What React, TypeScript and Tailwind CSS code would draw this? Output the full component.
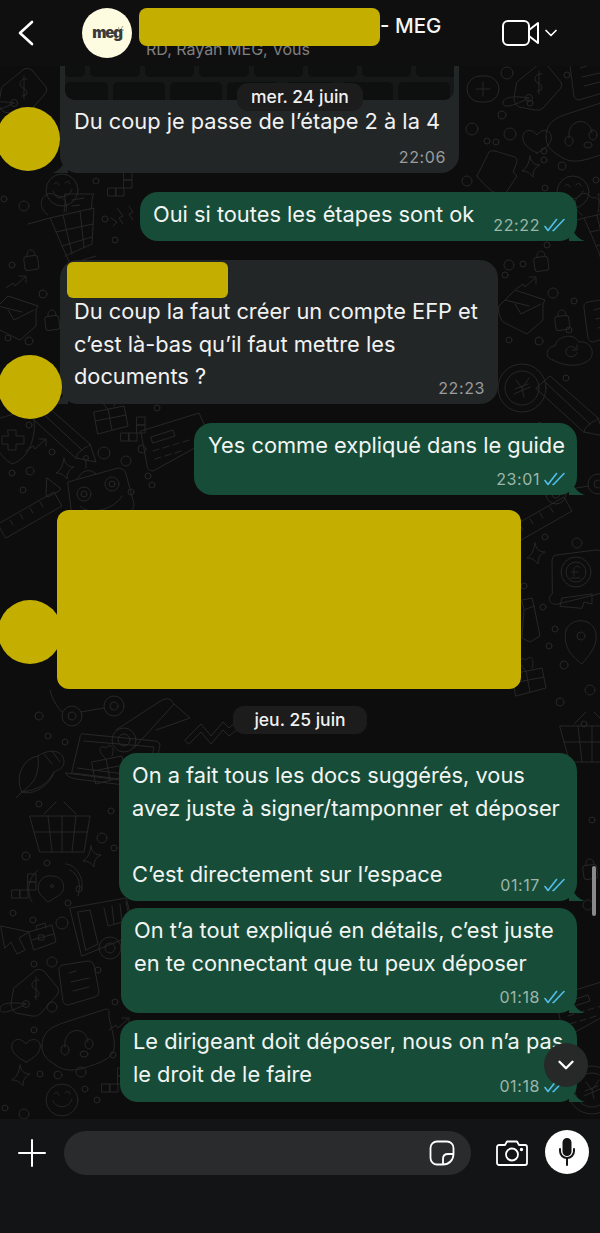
import { ChevronDown } from "lucide-react";
import type { ReactNode } from "react";

const FONT = "font-['Inter','Roboto',sans-serif]";

// Wallpaper doodles, each drawn around its own centre
const shapes: Record<string, ReactNode> = {
  tag: (
    <>
      <path d="M-20 -8 L2 -26 Q6 -28 10 -25 L24 -8 Q26 -4 23 -1 L6 18 Q3 21 -2 20 L-18 17 Q-23 14 -23 8 Z" />
      <path d="M5 -16 C-3 -17 -4 -9 1 -7 C6 -5 7 1 0 1 M2 -19 V4" />
      <circle cx="-8" cy="8" r="3.500" />
      <path d="M-8 8 C-20 14 -34 20 -34 13 C-34 6 -20 6 -8 8" />
    </>
  ),
  note: (
    <>
      <path d="M-18 -14 Q-19 -19 -14 -20 L11 -24 Q16 -24 17 -20 L22 7 Q22 11 18 12 L-9 20 Q-13 20 -14 16 Z" />
      <path d="M-8 -12 L-1 -14 M-6 -3 L12 -7 M-4 6 L12 2" />
    </>
  ),
  headset: (
    <>
      <path d="M-34 2 C-34 -14 -22 -18 -10 -22 L30 -35 C32 -35 33 -34 33 -32 C32 -22 40 -8 38 5 C36 16 20 20 8 24 C-6 28 -14 26 -22 20 C-30 15 -34 10 -34 2 Z" />
      <path d="M-11 3 C-14 -16 10 -20 12 -2" />
      <ellipse cx="-11" cy="6" rx="4" ry="5" />
      <ellipse cx="13" cy="0" rx="4" ry="5" />
      <ellipse cx="8" cy="10" rx="4" ry="3" />
    </>
  ),
  heart: <path d="M0 12 C-8 8 -16 2 -14 -6 C-12 -12 -4 -12 0 -6 C4 -12 12 -12 14 -6 C16 2 8 8 0 12 Z" />,
  sparkle: <path d="M-1 -12 C0 -6 3 -3 9 -3 C4 -1 2 3 2 9 C-1 5 -4 3 -9 3 C-4 0 -2 -5 -1 -12 Z" />,
  smile: (
    <>
      <circle r="16" />
      <path d="M-9 1 C-6 9 7 9 10 -1 M-8 -6 Q-5 -10 -3 -5 M3 -7 Q6 -11 8 -6" />
    </>
  ),
  cart: (
    <>
      <path d="M-38 -8 L-16 -14 L4 32 L30 24" />
      <path d="M-16 -14 L28 -24 L26 12 L-1 24 M-10 0 L27 -8 M-4 14 L26 5 M-3 -17 L6 22 M14 -21 L18 15" />
      <path d="M-18 -17 C-26 -22 -28 -34 -18 -38 C-14 -40 -10 -36 -8 -34 C-2 -36 2 -30 0 -20 M-2 -20 C0 -30 -1 -36 -2 -38 L28 -38 C24 -32 28 -28 24 -22 M6 -32 L18 -34 M6 -26 L14 -27" />
    </>
  ),
  lock: (
    <>
      <rect x="-7" y="-5" width="14" height="14" rx="3" transform="rotate(-8)" />
      <path d="M-4 -5 C-5 -13 4 -13 4 -6" />
    </>
  ),
  trend: <path d="M-11 6 L-4 1 L-2 4 L8 -5 M2 -6 L9 -6 L9 1" />,
  envelope: (
    <>
      <path d="M-24 -6 L-8 -22 L22 -12 L20 -8 L20 8 L4 22 L-20 10 Q-26 2 -24 -6 Z" />
      <path d="M-8 -8 L-2 2 L18 -8 M-18 -12 L6 -6" />
    </>
  ),
  bag: <path d="M-20 6 L-8 -18 Q-6 -20 -2 -19 L18 -13 Q20 -12 20 -8 L16 2 L20 6 L8 24 L-4 22 Q-14 14 -20 6 Z" />,
  plus: (
    <>
      <rect x="-16" y="-13" width="32" height="26" rx="13" />
      <path d="M0 -7 V7 M-7 0 H7" />
    </>
  ),
  cloud: (
    <>
      <path d="M-18 10 C-28 8 -24 -4 -16 -4 C-14 -14 2 -18 8 -8 C18 -10 26 2 18 10 C8 18 -8 16 -18 10 Z" />
      <path d="M5 -1 C1 -6 -6 -3 -5 3 C-4 8 4 8 6 3 M6 -5 V0 H1" />
    </>
  ),
  coin: (
    <>
      <circle r="24" />
      <circle r="17" />
      <path d="M-6 -8 L0 0 L7 -10 M-8 6 L8 -1 M-7 1 L6 -4 M0 0 L2 9" />
    </>
  ),
  pencil: (
    <>
      <path d="M-42 -24 L-28 -36 L20 6 L26 24 L6 20 Z" />
      <path d="M-33 -30 L12 12 M6 20 C8 12 12 14 14 10 C18 8 18 10 20 6" />
    </>
  ),
  shield: (
    <>
      <path d="M-18 -20 L8 -28 L22 -22 C24 -4 18 18 0 24 C-16 14 -20 0 -18 -20 Z" />
      <path d="M-4 -4 H-10 V4 H-4 V10 H4 V4 H12 V-4 H4 V-10 H-4 Z" />
    </>
  ),
  tetris: (
    <>
      <rect x="6" y="-14" width="8" height="8" />
      <rect x="6" y="-6" width="8" height="8" />
      <rect x="-2" y="2" width="8" height="8" />
      <rect x="-10" y="2" width="8" height="8" />
    </>
  ),
  calc: (
    <>
      <path d="M-34 -14 L24 -32 L36 -6 L-22 26 Q-28 26 -28 20 Z" />
      <path d="M-24 -8 L-2 -15 L0 -9 L-22 -2 Z M-22 6 L-16 4 M-12 3 L-6 1 M-2 0 L4 -2 M8 -3 L14 -5 M-20 14 L-14 12 M-10 11 L-4 9 M0 8 L6 6" />
    </>
  ),
  robot: (
    <>
      <path d="M-30 -8 L20 -22 Q26 -22 28 -16 L36 14 Q36 20 30 22 L-16 30 L-26 24 Z" />
      <circle cx="-14" cy="4" r="7" />
      <circle cx="-14" cy="4" r="3" />
      <circle cx="14" cy="-6" r="7" />
      <circle cx="14" cy="-6" r="3" />
      <path d="M-18 16 C-10 26 16 20 24 6 M-20 -12 C-16 -20 -8 -22 -2 -16 M-12 -22 V-30" />
      <circle cx="-12" cy="-32" r="2.500" />
    </>
  ),
  triangle: <path d="M-6 -10 L7 0 Q8 2 6 3 L-5 9 Q-7 8 -7 6 Z" />,
  ruler: (
    <>
      <path d="M-32 12 L24 -20 L32 -6 L-24 26 Z" />
      <path d="M-20 8 L-17 13 M-10 2 L-7 7 M0 -4 L3 1 M10 -10 L13 -5" />
    </>
  ),
  book: (
    <>
      <path d="M-26 -22 Q-26 -26 -22 -27 L18 -32 Q24 -32 24 -28 L24 8 Q24 12 20 12 L-20 22 C-30 24 -30 14 -26 12 Z" />
      <circle cx="-2" cy="-10" r="15" />
      <circle cx="-2" cy="-10" r="10" />
      <path d="M2 -14 C0 -18 -5 -16 -4 -11 L-4 -6 M-7 -4 H2 M-7 -10 H0 M-18 24 L-16 16 L14 12 V22 L6 20 L4 26 Z" />
    </>
  ),
  pin: (
    <>
      <path d="M-14 -12 C-8 -26 14 -24 16 -8 C18 6 6 16 2 22 C-6 16 -18 6 -14 -12 Z" />
      <circle cx="1" cy="-6" r="4" />
    </>
  ),
  tie: <path d="M-8 -18 L2 -20 L4 -12 L10 18 L0 24 L-8 20 L-6 -8 Z M-6 -8 L4 -12" />,
  laptop: (
    <>
      <path d="M-30 -28 Q-30 -32 -26 -31 L46 -24 Q50 -23 50 -20 L42 18 L-38 8 Z" />
      <path d="M-26 -24 L44 -18 L38 12 L-33 3" />
      <path d="M-44 8 L48 20 Q50 24 46 24 L-34 14 Q-44 12 -44 8 Z" />
    </>
  ),
  gift: (
    <>
      <path d="M-16 -6 L14 -12 L18 8 L-12 16 Z M-2 -9 L2 12 M-15 3 L16 -3" />
      <path d="M-2 -9 C-12 -18 -8 -24 -2 -20 C0 -24 8 -24 4 -12" />
    </>
  ),
  corn: (
    <>
      <path d="M-24 26 L-18 20 C-26 4 -16 -14 -2 -16 C10 -24 24 -22 24 -10 C24 -4 18 -2 14 0 C10 14 -8 24 -18 20" />
      <path d="M-18 20 C-6 12 0 2 -2 -16 M-18 20 C-2 18 8 12 14 0 M4 -18 L12 -8 M12 -21 L20 -10" />
    </>
  ),
  basket: (
    <>
      <path d="M-30 -14 H30 L24 22 H-20 Z" />
      <path d="M-26 2 H28 M-12 -14 L-8 22 M2 -14 V22 M16 -14 L12 22" />
      <path d="M-16 -16 L-4 -28 M4 -28 L16 -16" />
    </>
  ),
  waves: (
    <>
      <path d="M-10 10 C-22 2 -14 -14 -2 -12 C10 -12 14 2 4 8 L-6 14 Z" />
      <circle cx="-2" cy="-2" r="1.500" />
      <path d="M-22 14 C-28 4 -26 -10 -16 -18 M16 -18 C24 -14 28 -4 24 8 M12 -24 C20 -24 30 -12 28 0" />
    </>
  ),
  truck: (
    <>
      <path d="M-30 -24 L26 -34 L36 2 L-18 24 Z M-22 -20 L-10 -22 L-2 12 L-14 18 Z" />
      <path d="M4 -24 L8 -6 L30 -12 L26 -30 M12 -26 L14 -8 M20 -28 L22 -10" />
      <circle cx="10" cy="16" r="11" />
      <circle cx="10" cy="16" r="5" />
    </>
  ),
  cursor: <path d="M-14 -12 L14 -6 L4 0 L10 12 L2 16 L-4 4 L-10 10 Z" />,
  case: (
    <>
      <path d="M-13 -6 L10 -13 L14 4 L-8 12 Z M-5 -8 L-6 -12 L3 -15 L4 -10 M-10 2 L12 -4" />
      <rect x="-3" y="-3" width="5" height="5" />
    </>
  ),
  roll: (
    <>
      <circle cx="-28" cy="18" r="12" />
      <circle cx="-28" cy="18" r="6" />
      <path d="M-36 8 L10 -22 Q18 -26 22 -18 L-18 26 M4 8 L38 -4 L22 -18" />
    </>
  ),
  zigzag: <path d="M-30 12 L-14 -4 L-4 8 L8 -6 L14 0 L30 -14 L34 -8 L14 8 L8 2 L-4 16 L-14 4 L-26 16 Z" />,
  bolt: <path d="M-8 -10 L-2 -2 L-6 0 L-2 6 M4 -12 L8 -6 L4 -4 L8 2 M-14 0 L-8 4 L-12 8" />,
  chart: (
    <>
      <circle cx="-24" cy="4" r="10" />
      <circle cx="-24" cy="4" r="4" />
      <circle cx="18" cy="-6" r="10" />
      <circle cx="18" cy="-6" r="4" />
      <path d="M-15 0 L8 -4 M-34 0 C-40 -6 -44 -14 -46 -22" />
    </>
  ),
};

const doodles: [string, number, number][] = [
  ["plus", 483, 89], ["tag", 537, 90], ["note", 588, 80], ["headset", 580, 135], ["heart", 537, 141],
  ["sparkle", 531, 168], ["bag", 497, 170], ["smile", 573, 192], ["cart", 600, 232], ["lock", 541, 262],
  ["trend", 527, 283], ["envelope", 523, 312], ["lock", 562, 321], ["note", 602, 322], ["cloud", 571, 350],
  ["coin", 522, 388], ["pencil", 578, 412],
  ["tag", 22, 95], ["smile", 62, 190], ["cart", 66, 232], ["bolt", 125, 218], ["tetris", 118, 186],
  ["lock", 31, 261], ["trend", 17, 282], ["envelope", 16, 318], ["lock", 52, 321],
  ["shield", 12, 440], ["pencil", 70, 438], ["trend", 37, 445], ["sparkle", 65, 470], ["triangle", 53, 488],
  ["robot", 98, 490], ["ruler", 30, 512], ["tetris", 131, 431], ["calc", 175, 445], ["gift", 110, 418],
  ["ruler", 540, 517], ["book", 578, 582], ["pin", 580, 642], ["tie", 530, 618], ["gift", 528, 680],
  ["sparkle", 536, 555], ["gift", 538, 445], ["chart", 580, 490],
  ["roll", 152, 722], ["zigzag", 215, 728], ["chart", 96, 712], ["laptop", 110, 765], ["gift", 108, 768],
  ["corn", 40, 772], ["basket", 60, 830], ["sparkle", 92, 858], ["tetris", 22, 888], ["waves", 54, 888],
  ["truck", 100, 932], ["cursor", 15, 938], ["case", 42, 938],
  ["tag", 34, 996], ["note", 77, 985], ["headset", 76, 1044], ["heart", 26, 1050], ["sparkle", 21, 1077],
  ["smile", 62, 1100], ["tetris", 112, 1082], ["trend", 120, 1024],
  ["basket", 590, 740], ["calc", 590, 1010], ["coin", 592, 1090], ["lock", 590, 870],
];

const dots: [number, number, number][] = [
  [507, 73, 6], [502, 115, 4], [472, 129, 6], [487, 141, 3], [510, 134, 6], [496, 142, 3], [562, 166, 4], [544, 151, 3],
  [530, 103, 3], [567, 75, 3], [544, 160, 3], [467, 181, 5], [545, 188, 3], [596, 180, 3], [24, 206, 5], [96, 181, 3],
  [105, 219, 3], [115, 240, 3], [4, 199, 3], [12, 265, 3], [43, 294, 4], [29, 341, 4], [8, 338, 3], [547, 245, 3],
  [505, 275, 3], [509, 265, 5], [523, 264, 3], [553, 293, 5], [574, 301, 3], [569, 330, 3], [509, 340, 3], [539, 341, 4],
  [566, 378, 3], [29, 425, 3], [52, 452, 3], [30, 471, 4], [12, 473, 3], [23, 490, 3], [104, 453, 6], [142, 449, 4],
  [126, 461, 5], [148, 476, 3], [131, 492, 3], [157, 408, 3], [152, 485, 3], [545, 537, 3], [577, 543, 5], [524, 586, 3],
  [543, 607, 3], [555, 629, 3], [549, 646, 3], [564, 665, 4], [39, 716, 4], [48, 736, 3], [65, 742, 3], [39, 804, 3],
  [111, 811, 3], [26, 856, 4], [47, 863, 3], [102, 838, 5], [114, 848, 3], [79, 889, 3], [13, 913, 3], [33, 920, 3],
  [62, 923, 6], [68, 903, 3], [52, 962, 5], [34, 964, 3], [98, 970, 3], [115, 1002, 3], [52, 1007, 5], [34, 1030, 3],
  [113, 1055, 3], [40, 1074, 3], [58, 1075, 4], [81, 1072, 5], [85, 1089, 3], [97, 1100, 3], [5, 1108, 3], [24, 1114, 5],
  [540, 1000, 3], [590, 690, 5], [584, 724, 3], [560, 702, 4], [592, 820, 3], [588, 905, 5],
];

function Doodles() {
  return (
    <svg className="absolute left-0 top-[-66px] w-[600px] h-[1233px]" viewBox="0 0 600 1233" fill="none" stroke="#272727" strokeWidth="1" strokeLinecap="round" strokeLinejoin="round">
      {doodles.map(([name, x, y], i) => (
        <g key={i} transform={`translate(${x} ${y})`}>{shapes[name]}</g>
      ))}
      {dots.map(([x, y, r], i) => (
        <circle key={i} cx={x} cy={y} r={r} />
      ))}
    </svg>
  );
}

function Ticks() {
  return (
    <svg width="21" height="14" viewBox="0 0 21 14" fill="none" stroke="#53bdeb" strokeWidth="1.600" strokeLinecap="round" strokeLinejoin="round" className="ml-[4px]">
      <path d="M1 8.500 L4 12.500 L12.500 1.500" />
      <path d="M9 12.500 L9.500 12.500 L20 1.500" />
    </svg>
  );
}

function Sent({ className, time, children }: { className: string; time: string; children: ReactNode }) {
  return (
    <div className={`relative self-end mr-[23px] rounded-[18px] bg-[#174d38] text-[#f2f5f3] text-[21.800px] leading-[33px] ${className}`}>
      {children}
      <div className="absolute right-[12px] bottom-[6px] flex items-center text-[16px] leading-5 text-[#9db5aa] tracking-[0.6px]">
        {time}
        <Ticks />
      </div>
      <svg className="absolute right-[-8px] bottom-0" width="16" height="16" viewBox="0 0 16 16">
        <path d="M0 0 C4 6 8 14 16 16 L0 16 Z" fill="#174d38" />
      </svg>
    </div>
  );
}

function ReceivedTail() {
  return (
    <svg className="absolute left-[-8px] bottom-0" width="16" height="16" viewBox="0 0 16 16">
      <path d="M16 0 C12 6 8 14 0 16 L16 16 Z" fill="#232627" />
    </svg>
  );
}

function DatePill({ className, children }: { className: string; children: ReactNode }) {
  return (
    <div className={`flex items-center justify-center h-[28px] rounded-[11px] bg-[#1c1c1d] text-[17.500px] font-medium text-[#f0f0f0] ${className}`}>
      {children}
    </div>
  );
}

export default function App() {
  return (
    <div className={`flex flex-col w-[600px] h-[1233px] overflow-hidden bg-[#0d0d0d] ${FONT}`}>
      {/* Header */}
      <header className="relative z-10 flex items-center h-[66px] shrink-0 bg-[#0f0f10]">
        <svg className="ml-[17px]" width="18" height="26" viewBox="0 0 18 26" fill="none" stroke="#fff" strokeWidth="2.600" strokeLinecap="round" strokeLinejoin="round">
          <path d="M15 2 L3 13 L15 24" />
        </svg>
        <div className="relative ml-[47px] flex items-center justify-center w-[50px] h-[50px] rounded-full bg-[#fdfbe0]">
          <span className="text-[15px] font-black tracking-[-1.200px] text-[#3a3a3a]">meg</span>
          <svg className="absolute left-[36px] top-[17px]" width="6" height="6" viewBox="0 0 6 6" stroke="#8a8a70" strokeWidth="0.800">
            <path d="M1 5 L0.500 2 M3 4 L5 1 M3.500 5.500 L6 5" />
          </svg>
        </div>
        <div className="ml-[14px] flex flex-col self-start pt-[11px] w-[355px]">
          <div className="flex items-center h-[30px] pl-[234px] text-[20.500px] font-medium text-[#f5f5f5]">- MEG</div>
          <div className="-mt-[2px] text-[16px] leading-[20px] text-[#7f7f7f]">RD, Rayan MEG, Vous</div>
        </div>
        <svg width="38" height="26" viewBox="0 0 38 26" fill="none" stroke="#fff" strokeWidth="2" strokeLinejoin="round" className="ml-[1px]">
          <rect x="1" y="1" width="26" height="24" rx="5" />
          <path d="M27 10 L36 3 V23 L27 16" />
        </svg>
        <ChevronDown className="ml-[1px] text-white" size={20} strokeWidth={2} />
        <div className="absolute left-[139px] top-[8px] w-[241px] h-[38px] rounded-[8px] bg-[#c4ae00]" />
      </header>

      {/* Chat */}
      <main className="relative flex flex-col flex-1 overflow-hidden">
        <Doodles />

        {/* Received with photo, cut off by the header */}
        <div className="relative ml-[60px] w-[399px] h-[107px] rounded-b-[18px] bg-[#232627] text-[#f2f2f2] text-[21.800px]">
          <div className="mx-[5px] h-[34px] rounded-b-[10px] bg-[#161818] overflow-hidden flex flex-col gap-[5px]">
            <div className="flex shrink-0 gap-[5px] h-[11px]">
              {[20, 50, 49, 50, 49, 49, 49, 47].map((w, i) => (
                <div key={i} style={{ width: w }} className="shrink-0 rounded-b-[5px] bg-[#0e0f0f]" />
              ))}
            </div>
            <div className="flex shrink-0 gap-[5px] h-[30px]">
              {[43, 52, 52, 52, 52, 52, 52, 50].map((w, i) => (
                <div key={i} style={{ width: w }} className="shrink-0 rounded-t-[5px] bg-[#0e0f0f]" />
              ))}
            </div>
          </div>
          <div className="pl-[14px] mt-[5px] leading-[33px]">Du coup je passe de l’étape 2 à la 4</div>
          <div className="absolute right-[13px] bottom-[6px] text-[16px] leading-5 tracking-[0.6px] text-[#9a9c9d]">22:06</div>
          <ReceivedTail />
        </div>

        <Sent className="mt-[19px] w-[437px] h-[49px] pl-[13px] pt-[6px]" time="22:22">Oui si toutes les étapes sont ok</Sent>

        <div className="relative mt-[19px] ml-[60px] w-[438px] h-[144px] rounded-[18px] bg-[#232627] text-[#f2f2f2] text-[21.800px] leading-[32.500px] pl-[14px] pt-[35px]">
          <div>Du coup la faut créer un compte EFP et<br />c’est là-bas qu’il faut mettre les<br />documents ?</div>
          <div className="absolute right-[13px] bottom-[6px] text-[16px] leading-5 tracking-[0.6px] text-[#9a9c9d]">22:23</div>
          <div className="absolute left-[7px] top-[2px] w-[161px] h-[36px] rounded-[6px] bg-[#c4ae00]" />
          <ReceivedTail />
        </div>

        <Sent className="mt-[19px] w-[383px] h-[72px] pl-[14px] pt-[6px]" time="23:01">Yes comme expliqué dans le guide</Sent>

        <div className="relative mt-[15px] ml-[57px] w-[464px] h-[179px] rounded-[12px] bg-[#c4ae00]" />

        <DatePill className="relative mt-[17px] self-center w-[134px]">jeu. 25 juin</DatePill>

        <Sent className="mt-[19px] w-[458px] h-[148px] pl-[13px] pt-[6px]" time="01:17">
          On a fait tous les docs suggérés, vous<br />avez juste à signer/tamponner et déposer<br /><br />C’est directement sur l’espace
        </Sent>
        <Sent className="mt-[7px] w-[456px] h-[105px] pl-[13px] pt-[6px]" time="01:18">
          On t’a tout expliqué en détails, c’est juste<br />en te connectant que tu peux déposer
        </Sent>
        <Sent className="mt-[7px] w-[457px] h-[82px] pl-[13px] pt-[5px]" time="01:18">
          Le dirigeant doit déposer, nous on n’a pas<br />le droit de le faire
        </Sent>

        {/* Overlays */}
        <DatePill className="absolute left-[237px] top-[17px] w-[126px]">mer. 24 juin</DatePill>
        <div className="absolute left-[-4px] top-[41px] w-[64px] h-[64px] rounded-full bg-[#c4ae00]" />
        <div className="absolute left-[-2px] top-[289px] w-[64px] h-[64px] rounded-full bg-[#c4ae00]" />
        <div className="absolute left-[-2px] top-[534px] w-[64px] h-[64px] rounded-full bg-[#c4ae00]" />
        <div className="absolute right-[4px] top-[800px] w-[4px] h-[50px] rounded-full bg-[#8a8a8a]" />
        <div className="absolute left-[544px] top-[977px] flex items-center justify-center w-[44px] h-[44px] rounded-full bg-[#272929]">
          <ChevronDown className="text-white" size={26} strokeWidth={2.200} />
        </div>
      </main>

      {/* Composer */}
      <footer className="shrink-0 h-[114px] bg-[#131415] flex items-start pt-[12px]">
        <svg className="ml-[18px] mt-[8px]" width="28" height="28" viewBox="0 0 28 28" stroke="#fff" strokeWidth="2" strokeLinecap="round">
          <path d="M14 1 V27 M1 14 H27" />
        </svg>
        <div className="ml-[18px] flex items-center justify-end w-[407px] h-[44px] rounded-full bg-[#2a2b2c] pr-[16px]">
          <svg width="26" height="26" viewBox="0 0 26 26" fill="none" stroke="#fff" strokeWidth="1.800" strokeLinejoin="round">
            <path d="M8 1.500 H18 A6.500 6.500 0 0 1 24.500 8 V14 C24.500 20 20 24.500 14 24.500 H8 A6.500 6.500 0 0 1 1.500 18 V8 A6.500 6.500 0 0 1 8 1.500 Z" />
            <path d="M24 14 H19 C15.500 14 14 16 14 19 V24.500" />
          </svg>
        </div>
        <svg className="ml-[25px] mt-[9px]" width="32" height="26" viewBox="0 0 32 26" fill="none" stroke="#fff" strokeWidth="1.800" strokeLinejoin="round">
          <path d="M3 5 H9 L11 1.500 H21 L23 5 H29 A2 2 0 0 1 31 7 V23 A2 2 0 0 1 29 25 H3 A2 2 0 0 1 1 23 V7 A2 2 0 0 1 3 5 Z" />
          <circle cx="16" cy="14.500" r="6" />
          <circle cx="25.500" cy="9.500" r="0.800" fill="#fff" />
        </svg>
        <div className="ml-[17px] flex items-center justify-center w-[44px] h-[44px] rounded-full bg-white -mt-[1px]">
          <svg width="18" height="28" viewBox="0 0 18 28" fill="none" stroke="#141414" strokeWidth="2" strokeLinecap="round">
            <rect x="5.500" y="1" width="7" height="16" rx="3.500" fill="#141414" />
            <path d="M2 11 V13 A7 7 0 0 0 16 13 V11" />
            <path d="M9 20 V27" />
          </svg>
        </div>
      </footer>
    </div>
  );
}
